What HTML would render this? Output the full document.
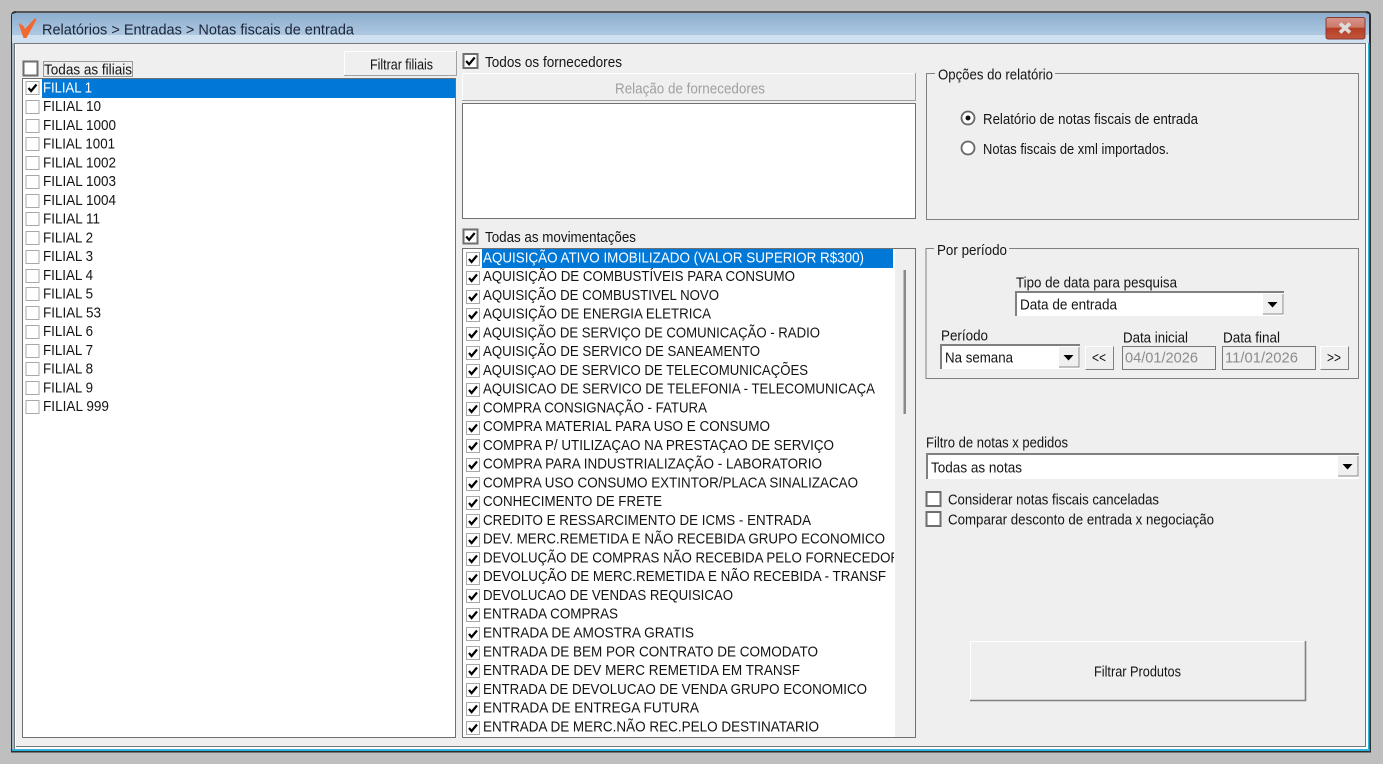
<!DOCTYPE html>
<html><head><meta charset="utf-8"><style>
html,body{margin:0;padding:0;width:1383px;height:764px;overflow:hidden;background:#bfbfbf}
svg{display:block;position:absolute;left:0;top:0;filter:blur(.32px)}
text{font-family:"Liberation Sans",sans-serif;font-size:15px;fill:#141414;transform:translateY(.25px)}
.rows text{transform:translateY(-.7px)}
</style></head><body>
<svg width="1383" height="764" viewBox="0 0 1383 764" xmlns="http://www.w3.org/2000/svg">
<defs>
<linearGradient id="tb" x1="0" y1="0" x2="0" y2="1"><stop offset="0" stop-color="#8eafcf"/><stop offset="1" stop-color="#aec8e2"/></linearGradient>
<linearGradient id="cl" x1="0" y1="0" x2="0" y2="1"><stop offset="0" stop-color="#d5958a"/><stop offset=".45" stop-color="#cb7a6a"/><stop offset=".5" stop-color="#b63e26"/><stop offset="1" stop-color="#c0563c"/></linearGradient>
<clipPath id="lc"><rect x="482" y="249" width="412" height="488"/></clipPath>
<g id="ck"><rect x=".5" y=".5" width="13" height="13" fill="#fff" stroke="#a8a8a8"/></g>
<g id="kk"><rect x=".5" y=".5" width="13" height="13" fill="#fff" stroke="#a8a8a8"/><path d="M3 7l2.6 3L11 3.5" fill="none" stroke="#000" stroke-width="2.2"/></g>
<g id="bb"><rect x="1" y="1" width="14" height="14" fill="#fff" stroke="#6e6e6e" stroke-width="2"/></g>
<g id="bk"><rect x="1" y="1" width="14" height="14" fill="#fff" stroke="#6e6e6e" stroke-width="2"/><path d="M3.7 8l2.9 3.3L12.2 4.5" fill="none" stroke="#000" stroke-width="2.2"/></g>
<g id="ar"><rect x="0" y="0" width="20" height="20" fill="#f0f0f0"/><path d="M0 20H20V0" fill="none" stroke="#8a8a8a" stroke-width="1"/><path d="M4.5 8h10l-5 5.500z" fill="#000"/></g>
</defs>

<!-- window frame -->
<path d="M11 752.500V16Q11 11 16 11H1366Q1371 11 1371 16V752.500Z" fill="#2e2e2e"/>
<rect x="16" y="11" width="1350" height="2" fill="#555"/>
<path d="M12 750V17Q12 13 16 13H1365Q1369 13 1369 17V750Z" fill="#8fb0cf"/>
<rect x="12" y="14" width="1357" height="21" fill="url(#tb)"/>
<rect x="12" y="35" width="1357" height="8" fill="#cfe0f0"/>
<rect x="1368" y="43" width="1.500" height="708" fill="#27b4d8"/>
<rect x="12" y="749.200" width="1358" height="1.800" fill="#27b4d8"/>
<rect x="12" y="43" width="2" height="706" fill="#9fb4c8"/>
<rect x="14" y="43" width="1354" height="706" fill="#fff"/>
<rect x="16" y="44" width="1349" height="702" fill="#efefef"/>
<path d="M14.500 749V43.500H1365.500V746.500H16" fill="none" stroke="#777"/>

<!-- title -->
<path d="M18.500 23L23 25.500L25 29L35 18L36.500 19.500L26.500 38H23.500Z" fill="#f2682e"/>
<text x="42" y="34" textLength="312" lengthAdjust="spacingAndGlyphs" style="fill:#1b2436">Relatórios &gt; Entradas &gt; Notas fiscais de entrada</text>
<rect x="1326" y="17.500" width="39" height="21.500" rx="2" fill="url(#cl)" stroke="#8a3a36"/>
<path d="M1340 23.500l10 9M1350 23.500l-10 9" stroke="#dcdcdc" stroke-width="3.600" fill="none"/>

<!-- filiais -->
<use href="#bb" x="22.500" y="60.500"/>
<text x="44" y="74" textLength="88" lengthAdjust="spacingAndGlyphs">Todas as filiais</text>
<rect x="43.500" y="61.500" width="89" height="15" fill="none" stroke="#444" stroke-dasharray="1 1"/>
<rect x="344" y="51" width="113" height="25" fill="#efefef"/>
<path d="M344.500 76V51.500H456.500" fill="none" stroke="#fff"/>
<path d="M344 75.500H456.500V51" fill="none" stroke="#a0a0a0"/>
<text x="370" y="69" textLength="63" lengthAdjust="spacingAndGlyphs">Filtrar filiais</text>

<rect x="22.500" y="78.500" width="433" height="659" fill="#fff" stroke="#707070"/>
<rect x="42" y="79" width="413" height="19" fill="#0078d7"/>
<g class="rows">
<use href="#kk" x="25.500" y="81"/><text x="43" y="93" textLength="49" lengthAdjust="spacingAndGlyphs" style="fill:#fff">FILIAL 1</text>
<use href="#ck" x="25.500" y="100"/><text x="43" y="111.800" textLength="58" lengthAdjust="spacingAndGlyphs">FILIAL 10</text>
<use href="#ck" x="25.500" y="119"/><text x="43" y="130.500" textLength="73" lengthAdjust="spacingAndGlyphs">FILIAL 1000</text>
<use href="#ck" x="25.500" y="137"/><text x="43" y="149.300" textLength="72" lengthAdjust="spacingAndGlyphs">FILIAL 1001</text>
<use href="#ck" x="25.500" y="156"/><text x="43" y="168" textLength="73" lengthAdjust="spacingAndGlyphs">FILIAL 1002</text>
<use href="#ck" x="25.500" y="175"/><text x="43" y="186.800" textLength="73" lengthAdjust="spacingAndGlyphs">FILIAL 1003</text>
<use href="#ck" x="25.500" y="194"/><text x="43" y="205.600" textLength="73" lengthAdjust="spacingAndGlyphs">FILIAL 1004</text>
<use href="#ck" x="25.500" y="212"/><text x="43" y="224.300" textLength="57" lengthAdjust="spacingAndGlyphs">FILIAL 11</text>
<use href="#ck" x="25.500" y="231"/><text x="43" y="243.100" textLength="50" lengthAdjust="spacingAndGlyphs">FILIAL 2</text>
<use href="#ck" x="25.500" y="250"/><text x="43" y="261.800" textLength="50" lengthAdjust="spacingAndGlyphs">FILIAL 3</text>
<use href="#ck" x="25.500" y="269"/><text x="43" y="280.600" textLength="50" lengthAdjust="spacingAndGlyphs">FILIAL 4</text>
<use href="#ck" x="25.500" y="287"/><text x="43" y="299.400" textLength="50" lengthAdjust="spacingAndGlyphs">FILIAL 5</text>
<use href="#ck" x="25.500" y="306"/><text x="43" y="318.100" textLength="58" lengthAdjust="spacingAndGlyphs">FILIAL 53</text>
<use href="#ck" x="25.500" y="325"/><text x="43" y="336.900" textLength="50" lengthAdjust="spacingAndGlyphs">FILIAL 6</text>
<use href="#ck" x="25.500" y="344"/><text x="43" y="355.600" textLength="50" lengthAdjust="spacingAndGlyphs">FILIAL 7</text>
<use href="#ck" x="25.500" y="362"/><text x="43" y="374.400" textLength="50" lengthAdjust="spacingAndGlyphs">FILIAL 8</text>
<use href="#ck" x="25.500" y="381"/><text x="43" y="393.200" textLength="50" lengthAdjust="spacingAndGlyphs">FILIAL 9</text>
<use href="#ck" x="25.500" y="400"/><text x="43" y="411.900" textLength="66" lengthAdjust="spacingAndGlyphs">FILIAL 999</text>
</g>

<!-- fornecedores -->
<use href="#bk" x="462.500" y="53"/>
<text x="485" y="66.500" textLength="137" lengthAdjust="spacingAndGlyphs">Todos os fornecedores</text>
<rect x="462" y="73" width="454" height="28" fill="#efefef"/>
<path d="M462.500 101V73.500H915.500" fill="none" stroke="#fff"/>
<path d="M462 100.500H915.500V73" fill="none" stroke="#a0a0a0"/>
<text x="615" y="93" textLength="150" lengthAdjust="spacingAndGlyphs" style="fill:#a0a0a0">Relação de fornecedores</text>
<rect x="462.500" y="103.500" width="453" height="115" fill="#fff" stroke="#707070"/>

<!-- movimentações -->
<use href="#bk" x="462.500" y="228.500"/>
<text x="485" y="241.500" textLength="151" lengthAdjust="spacingAndGlyphs">Todas as movimentações</text>
<rect x="462.500" y="248.500" width="453" height="489" fill="#efefef" stroke="#707070"/>
<rect x="463" y="249" width="432" height="488" fill="#fff"/>
<rect x="482" y="249" width="411" height="19" fill="#0078d7"/>
<rect x="903.500" y="270" width="2.500" height="144" fill="#8a8a8a"/>
<g class="rows">
<use href="#kk" x="466" y="252"/><text x="483" y="263" textLength="381" lengthAdjust="spacingAndGlyphs" style="fill:#fff">AQUISIÇÃO ATIVO IMOBILIZADO (VALOR SUPERIOR R$300)</text>
<use href="#kk" x="466" y="271"/><text x="483" y="281.800" textLength="312" lengthAdjust="spacingAndGlyphs">AQUISIÇÃO DE COMBUSTÍVEIS PARA CONSUMO</text>
<use href="#kk" x="466" y="290"/><text x="483" y="300.500" textLength="236" lengthAdjust="spacingAndGlyphs">AQUISIÇÃO DE COMBUSTIVEL NOVO</text>
<use href="#kk" x="466" y="308"/><text x="483" y="319.300" textLength="228" lengthAdjust="spacingAndGlyphs">AQUISIÇÃO DE ENERGIA ELETRICA</text>
<use href="#kk" x="466" y="327"/><text x="483" y="338" textLength="337" lengthAdjust="spacingAndGlyphs">AQUISIÇÃO DE SERVIÇO DE COMUNICAÇÃO - RADIO</text>
<use href="#kk" x="466" y="346"/><text x="483" y="356.800" textLength="277" lengthAdjust="spacingAndGlyphs">AQUISIÇÃO DE SERVICO DE SANEAMENTO</text>
<use href="#kk" x="466" y="364"/><text x="483" y="375.600" textLength="325" lengthAdjust="spacingAndGlyphs">AQUISIÇAO DE SERVICO DE TELECOMUNICAÇÕES</text>
<use href="#kk" x="466" y="383"/><text x="483" y="394.300" textLength="392" lengthAdjust="spacingAndGlyphs">AQUISICAO DE SERVICO DE TELEFONIA - TELECOMUNICAÇA</text>
<use href="#kk" x="466" y="402"/><text x="483" y="413.100" textLength="224" lengthAdjust="spacingAndGlyphs">COMPRA CONSIGNAÇÃO - FATURA</text>
<use href="#kk" x="466" y="421"/><text x="483" y="431.800" textLength="287" lengthAdjust="spacingAndGlyphs">COMPRA MATERIAL PARA USO E CONSUMO</text>
<use href="#kk" x="466" y="439"/><text x="483" y="450.600" textLength="351" lengthAdjust="spacingAndGlyphs">COMPRA P/ UTILIZAÇAO NA PRESTAÇAO DE SERVIÇO</text>
<use href="#kk" x="466" y="458"/><text x="483" y="469.400" textLength="339" lengthAdjust="spacingAndGlyphs">COMPRA PARA INDUSTRIALIZAÇÃO - LABORATORIO</text>
<use href="#kk" x="466" y="477"/><text x="483" y="488.100" textLength="375" lengthAdjust="spacingAndGlyphs">COMPRA USO CONSUMO EXTINTOR/PLACA SINALIZACAO</text>
<use href="#kk" x="466" y="496"/><text x="483" y="506.900" textLength="179" lengthAdjust="spacingAndGlyphs">CONHECIMENTO DE FRETE</text>
<use href="#kk" x="466" y="514"/><text x="483" y="525.600" textLength="328" lengthAdjust="spacingAndGlyphs">CREDITO E RESSARCIMENTO DE ICMS - ENTRADA</text>
<use href="#kk" x="466" y="533"/><text x="483" y="544.400" textLength="402" lengthAdjust="spacingAndGlyphs">DEV. MERC.REMETIDA E NÃO RECEBIDA GRUPO ECONOMICO</text>
<g clip-path="url(#lc)"><text x="483" y="563.200" textLength="417" lengthAdjust="spacingAndGlyphs">DEVOLUÇÃO DE COMPRAS NÃO RECEBIDA PELO FORNECEDOR</text></g>
<use href="#kk" x="466" y="552"/>
<use href="#kk" x="466" y="571"/><text x="483" y="581.900" textLength="403" lengthAdjust="spacingAndGlyphs">DEVOLUÇÃO DE MERC.REMETIDA E NÃO RECEBIDA - TRANSF</text>
<use href="#kk" x="466" y="589"/><text x="483" y="600.700" textLength="250" lengthAdjust="spacingAndGlyphs">DEVOLUCAO DE VENDAS REQUISICAO</text>
<use href="#kk" x="466" y="608"/><text x="483" y="619.400" textLength="135" lengthAdjust="spacingAndGlyphs">ENTRADA COMPRAS</text>
<use href="#kk" x="466" y="627"/><text x="483" y="638.200" textLength="211" lengthAdjust="spacingAndGlyphs">ENTRADA DE AMOSTRA GRATIS</text>
<use href="#kk" x="466" y="646"/><text x="483" y="657" textLength="335" lengthAdjust="spacingAndGlyphs">ENTRADA DE BEM POR CONTRATO DE COMODATO</text>
<use href="#kk" x="466" y="664"/><text x="483" y="675.700" textLength="317" lengthAdjust="spacingAndGlyphs">ENTRADA DE DEV MERC REMETIDA EM TRANSF</text>
<use href="#kk" x="466" y="683"/><text x="483" y="694.500" textLength="384" lengthAdjust="spacingAndGlyphs">ENTRADA DE DEVOLUCAO DE VENDA GRUPO ECONOMICO</text>
<use href="#kk" x="466" y="702"/><text x="483" y="713.200" textLength="216" lengthAdjust="spacingAndGlyphs">ENTRADA DE ENTREGA FUTURA</text>
<use href="#kk" x="466" y="721"/><text x="483" y="732" textLength="336" lengthAdjust="spacingAndGlyphs">ENTRADA DE MERC.NÃO REC.PELO DESTINATARIO</text>
</g>

<!-- opções -->
<rect x="926.500" y="73.500" width="432" height="146" fill="none" stroke="#808080"/>
<rect x="935" y="68" width="120" height="12" fill="#efefef"/>
<text x="938" y="79" textLength="115" lengthAdjust="spacingAndGlyphs">Opções do relatório</text>
<circle cx="968" cy="118" r="6.500" fill="#fff" stroke="#666" stroke-width="1.800"/>
<circle cx="968" cy="118" r="2.500" fill="#111"/>
<text x="983" y="123.500" textLength="215" lengthAdjust="spacingAndGlyphs">Relatório de notas fiscais de entrada</text>
<circle cx="968" cy="148" r="6.500" fill="#fff" stroke="#666" stroke-width="1.800"/>
<text x="983" y="153.500" textLength="186" lengthAdjust="spacingAndGlyphs">Notas fiscais de xml importados.</text>

<!-- por período -->
<rect x="926" y="248.500" width="432.500" height="130" fill="none" stroke="#808080"/>
<rect x="934" y="244" width="75" height="12" fill="#efefef"/>
<text x="937" y="254.500" textLength="70" lengthAdjust="spacingAndGlyphs">Por período</text>
<text x="1016" y="287" textLength="161" lengthAdjust="spacingAndGlyphs">Tipo de data para pesquisa</text>
<rect x="1015" y="291" width="269" height="25" fill="#fff"/>
<path d="M1016 316V292H1284" fill="none" stroke="#808080" stroke-width="2"/>
<use href="#ar" x="1263" y="294"/>
<text x="1020" y="309" textLength="97" lengthAdjust="spacingAndGlyphs">Data de entrada</text>

<text x="941" y="340" textLength="47" lengthAdjust="spacingAndGlyphs">Período</text>
<rect x="940" y="344" width="140" height="25" fill="#fff"/>
<path d="M941 369V345H1080" fill="none" stroke="#808080" stroke-width="2"/>
<use href="#ar" x="1059" y="347"/>
<text x="945" y="362" textLength="68" lengthAdjust="spacingAndGlyphs">Na semana</text>
<rect x="1085.500" y="346.500" width="28" height="23" fill="#efefef"/>
<path d="M1085.500 369.500V346.500H1113" fill="none" stroke="#fff"/>
<path d="M1085.500 369.500H1113.500V346.500" fill="none" stroke="#808080"/>
<text x="1092" y="362" textLength="14" lengthAdjust="spacingAndGlyphs">&lt;&lt;</text>
<text x="1123" y="342" textLength="65" lengthAdjust="spacingAndGlyphs">Data inicial</text>
<rect x="1122.500" y="346.500" width="93" height="23" fill="#efefef" stroke="#777"/>
<text x="1125" y="362" textLength="73" lengthAdjust="spacingAndGlyphs" style="fill:#8c8c8c">04/01/2026</text>
<text x="1223" y="342" textLength="57" lengthAdjust="spacingAndGlyphs">Data final</text>
<rect x="1222.500" y="346.500" width="93" height="23" fill="#efefef" stroke="#777"/>
<text x="1225" y="362" textLength="73" lengthAdjust="spacingAndGlyphs" style="fill:#8c8c8c">11/01/2026</text>
<rect x="1320.500" y="346.500" width="28" height="23" fill="#efefef"/>
<path d="M1320.500 369.500V346.500H1348" fill="none" stroke="#fff"/>
<path d="M1320.500 369.500H1348.500V346.500" fill="none" stroke="#808080"/>
<text x="1327" y="362" textLength="14" lengthAdjust="spacingAndGlyphs">&gt;&gt;</text>

<!-- filtro -->
<text x="926" y="447" textLength="142" lengthAdjust="spacingAndGlyphs">Filtro de notas x pedidos</text>
<rect x="926" y="453" width="433" height="26" fill="#fff"/>
<path d="M927 479V454H1359" fill="none" stroke="#808080" stroke-width="2"/>
<use href="#ar" x="1338" y="456"/>
<text x="931" y="472" textLength="91" lengthAdjust="spacingAndGlyphs">Todas as notas</text>
<use href="#bb" x="925.500" y="491"/>
<text x="948" y="504" textLength="211" lengthAdjust="spacingAndGlyphs">Considerar notas fiscais canceladas</text>
<use href="#bb" x="925.500" y="511"/>
<text x="948" y="524" textLength="266" lengthAdjust="spacingAndGlyphs">Comparar desconto de entrada x negociação</text>

<!-- button -->
<path d="M970.500 701V641.500H1305" fill="none" stroke="#fff"/>
<path d="M970 700.500H1305.500V641" fill="none" stroke="#808080" stroke-width="1.600"/>
<text x="1094" y="676" textLength="87" lengthAdjust="spacingAndGlyphs">Filtrar Produtos</text>
</svg>
</body></html>
